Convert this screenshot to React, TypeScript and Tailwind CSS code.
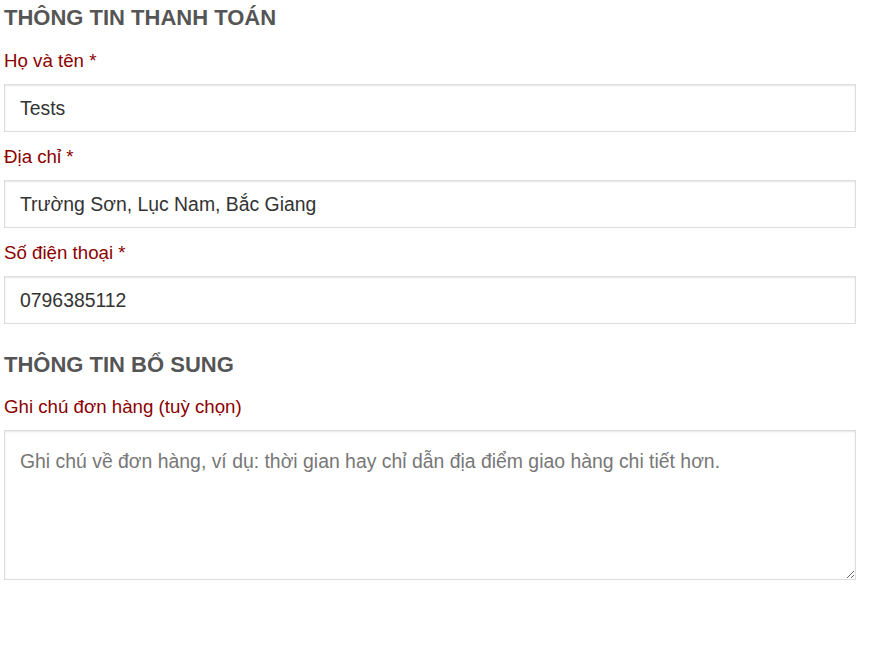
const fields = [
  { label: 'Họ và tên *', value: 'Tests' },
  { label: 'Địa chỉ *', value: 'Trường Sơn, Lục Nam, Bắc Giang' },
  { label: 'Số điện thoại *', value: '0796385112' },
];

export default function App() {
  return (
    <div className="min-h-[668px] bg-white font-['Liberation_Sans',Arial,sans-serif]">
      <div className="ml-[4px] w-[852px]">
        <h3 className="text-[22px] leading-[36px] font-bold uppercase text-[#555]">Thông tin thanh toán</h3>
        {fields.map((f) => (
          <div key={f.label}>
            <label className="block mt-[13px] mb-[11px] text-[18.7px] leading-[24px] text-[#8b0000]">{f.label}</label>
            <input
              readOnly
              value={f.value}
              className="block w-full h-[48px] px-[15px] border border-[#ddd] bg-white text-[19.4px] text-[#333] shadow-[inset_0_1px_2px_rgba(0,0,0,0.1)] outline-none"
            />
          </div>
        ))}
        <h3 className="mt-[23px] text-[22px] leading-[36px] font-bold uppercase text-[#555]">Thông tin bổ sung</h3>
        <label className="block mt-[12px] mb-[11px] text-[18.7px] leading-[24px] text-[#8b0000]">Ghi chú đơn hàng (tuỳ chọn)</label>
        <textarea
          placeholder="Ghi chú về đơn hàng, ví dụ: thời gian hay chỉ dẫn địa điểm giao hàng chi tiết hơn."
          className="block w-full h-[150px] px-[15px] pt-[17px] pb-[12px] border border-[#ddd] bg-white text-[19.4px] leading-[26px] text-[#333] placeholder:text-[#777] shadow-[inset_0_1px_2px_rgba(0,0,0,0.1)] outline-none"
        />
      </div>
    </div>
  );
}
